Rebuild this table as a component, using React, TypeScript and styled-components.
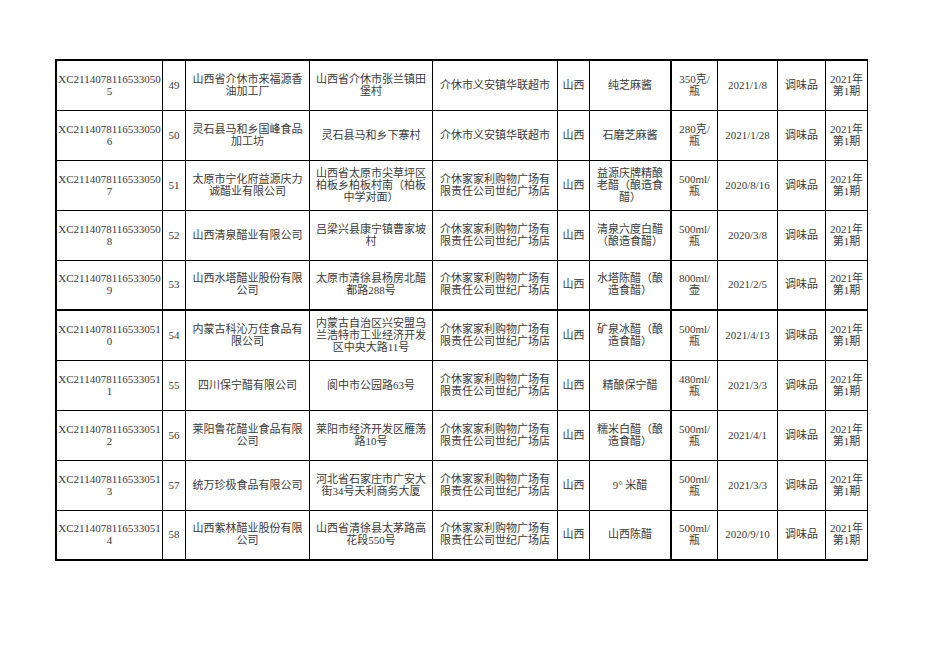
import React from "react";
import styled, {createGlobalStyle} from "styled-components";

const GlobalStyle = createGlobalStyle`
  html, body {
    margin: 0;
    padding: 0;
    background: #ffffff;
  }
  body {
    font-family: "Liberation Serif", "Noto Sans CJK SC", serif;
  }
`;

// cell widths (right border included)
const COLS = [106, 23, 124, 123, 125, 32, 82, 46, 60, 48, 42];
const THICK_COL = 6;
const THICK_ROW = 4;

const Page = styled.div`
  width: 936px;
  height: 662px;
  padding: 59px 0 0 55px;
  box-sizing: border-box;
  background: #ffffff;
`;

const Sheet = styled.div`
  display: grid;
  grid-template-columns: ${COLS.map(w => `${w}px`).join(" ")};
  grid-auto-rows: 50px;
  width: max-content;
  border-top: 2px solid #000;
  border-left: 2px solid #000;
`;

const Cell = styled.div<{ $thickRight?: boolean; $thickBottom?: boolean }>`
  box-sizing: border-box;
  display: flex;
  align-items: center;
  justify-content: center;
  text-align: center;
  border-right: ${p => (p.$thickRight ? 2 : 1)}px solid #000;
  border-bottom: ${p => (p.$thickBottom ? 2 : 1)}px solid #000;
  font-size: 11px;
  line-height: 12px;
  color: #3a3a3a;
  white-space: nowrap;
  overflow: hidden;
  padding-bottom: 2px;
`;

const Line = styled.span`
  display: block;
`;

const MARKET_A = "介休市义安镇华联超市";
const MARKET_B = "介休家家利购物广场有|限责任公司世纪广场店";

const rows: string[][] = [
  ["XC2114078116533050|5", "49", "山西省介休市来福源香|油加工厂", "山西省介休市张兰镇田|堡村", MARKET_A, "山西", "纯芝麻酱", "350克/|瓶", "2021/1/8"],
  ["XC2114078116533050|6", "50", "灵石县马和乡国峰食品|加工坊", "灵石县马和乡下寨村", MARKET_A, "山西", "石磨芝麻酱", "280克/|瓶", "2021/1/28"],
  ["XC2114078116533050|7", "51", "太原市宁化府益源庆力|诚醋业有限公司", "山西省太原市尖草坪区|柏板乡柏板村南（柏板|中学对面）", MARKET_B, "山西", "益源庆牌精酿|老醋（酿造食|醋）", "500ml/|瓶", "2020/8/16"],
  ["XC2114078116533050|8", "52", "山西清泉醋业有限公司", "吕梁兴县康宁镇曹家坡|村", MARKET_B, "山西", "清泉六度白醋|（酿造食醋）", "500ml/|瓶", "2020/3/8"],
  ["XC2114078116533050|9", "53", "山西水塔醋业股份有限|公司", "太原市清徐县杨房北醋|都路288号", MARKET_B, "山西", "水塔陈醋（酿|造食醋）", "800ml/|壶", "2021/2/5"],
  ["XC2114078116533051|0", "54", "内蒙古科沁万佳食品有|限公司", "内蒙古自治区兴安盟乌|兰浩特市工业经济开发|区中央大路11号", MARKET_B, "山西", "矿泉冰醋（酿|造食醋）", "500ml/|瓶", "2021/4/13"],
  ["XC2114078116533051|1", "55", "四川保宁醋有限公司", "阆中市公园路63号", MARKET_B, "山西", "精酿保宁醋", "480ml/|瓶", "2021/3/3"],
  ["XC2114078116533051|2", "56", "莱阳鲁花醋业食品有限|公司", "莱阳市经济开发区雁荡|路10号", MARKET_B, "山西", "糯米白醋（酿|造食醋）", "500ml/|瓶", "2021/4/1"],
  ["XC2114078116533051|3", "57", "统万珍极食品有限公司", "河北省石家庄市广安大|街34号天利商务大厦", MARKET_B, "山西", "9° 米醋", "500ml/|瓶", "2021/3/3"],
  ["XC2114078116533051|4", "58", "山西紫林醋业股份有限|公司", "山西省清徐县太茅路高|花段550号", MARKET_B, "山西", "山西陈醋", "500ml/|瓶", "2020/9/10"],
];

const App = () => {
  const lastRow = rows.length - 1;
  return (
    <>
      <GlobalStyle/>
      <Page>
        <Sheet>
          {rows.map((row, r) =>
            [...row, "调味品", "2021年|第1期"].map((text, c) => (
              <Cell
                key={`${r}-${c}`}
                $thickRight={c === THICK_COL}
                $thickBottom={r === THICK_ROW || r === lastRow}
              >
                <div>
                  {text.split("|").map((line, i) => (
                    <Line key={i}>{line}</Line>
                  ))}
                </div>
              </Cell>
            ))
          )}
        </Sheet>
      </Page>
    </>
  );
};

export default App;
